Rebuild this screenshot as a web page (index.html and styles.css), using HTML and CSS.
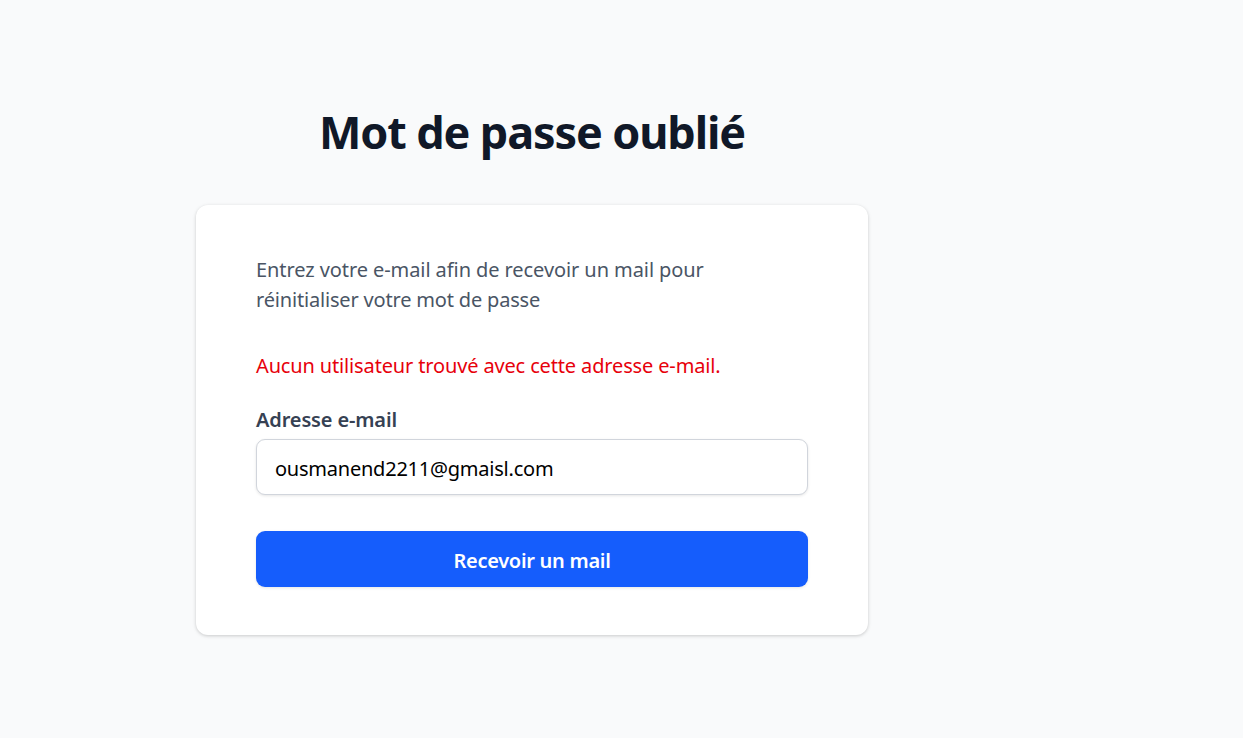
FILE: index.html
```html
<!DOCTYPE html>
<html lang="fr">
<head>
<meta charset="utf-8">
<title>Mot de passe oublié</title>
<link rel="stylesheet" href="styles.css">
</head>
<body>
<main class="page">
  <h1 class="title">Mot de passe oublié</h1>
  <form class="card">
    <p class="intro"><span class="intro-first">Entrez votre e-mail afin de recevoir un mail pour</span><br><span class="intro-second">réinitialiser votre mot de passe</span></p>
    <p class="error">Aucun utilisateur trouvé avec cette adresse e-mail.</p>
    <label class="label" for="email">Adresse e-mail</label>
    <input class="input" id="email" type="email" value="ousmanend2211@gmaisl.com">
    <button class="button" type="button">Recevoir un mail</button>
  </form>
</main>
</body>
</html>
```
FILE: styles.css
```css
* { box-sizing: border-box; }
body {
  margin: 0;
  min-height: 738px;
  background: #f9fafb;
  font-family: "Noto Sans", "Open Sans", sans-serif;
  font-size: 20px;
  line-height: 30px;
}
.page { width: 672px; margin-left: 196px; padding-top: 102px; }
.title {
  margin: 0 0 43px;
  color: #101828;
  font-size: 45px;
  line-height: 60px;
  font-weight: 700;
  letter-spacing: -1.13px;
  text-align: center;
  white-space: nowrap;
}
.card {
  display: flex;
  flex-direction: column;
  height: 430px;
  padding: 50px 60px 48px;
  background: #fff;
  border-radius: 12px;
  box-shadow: 0 1px 4px rgba(0,0,0,.1), 0 1px 3px rgba(0,0,0,.1);
}
.intro { margin: 0; color: #4a5565; white-space: nowrap; }
.intro-first { letter-spacing: -0.08px; }
.intro-second { letter-spacing: -0.18px; }
.error { margin: 36px 0 24px; color: #e7000b; letter-spacing: -0.145px; white-space: nowrap; }
.label { color: #364153; font-weight: 600; line-height: 30px; letter-spacing: -0.14px; }
.input {
  height: 56px;
  margin: 4px 0 36px;
  padding: 2px 18px 0;
  border: 1px solid #d1d5dc;
  border-radius: 9px;
  background: #fff;
  color: #000;
  font: inherit;
  letter-spacing: -0.23px;
  box-shadow: 0 1px 3px rgba(0,0,0,.1);
}
.button {
  height: 56px;
  padding: 3px 0 0;
  border: 0;
  border-radius: 9px;
  background: #155dfc;
  color: #fff;
  font: inherit;
  font-weight: 600;
  letter-spacing: -0.28px;
  box-shadow: 0 1px 3px rgba(0,0,0,.1);
}
```
